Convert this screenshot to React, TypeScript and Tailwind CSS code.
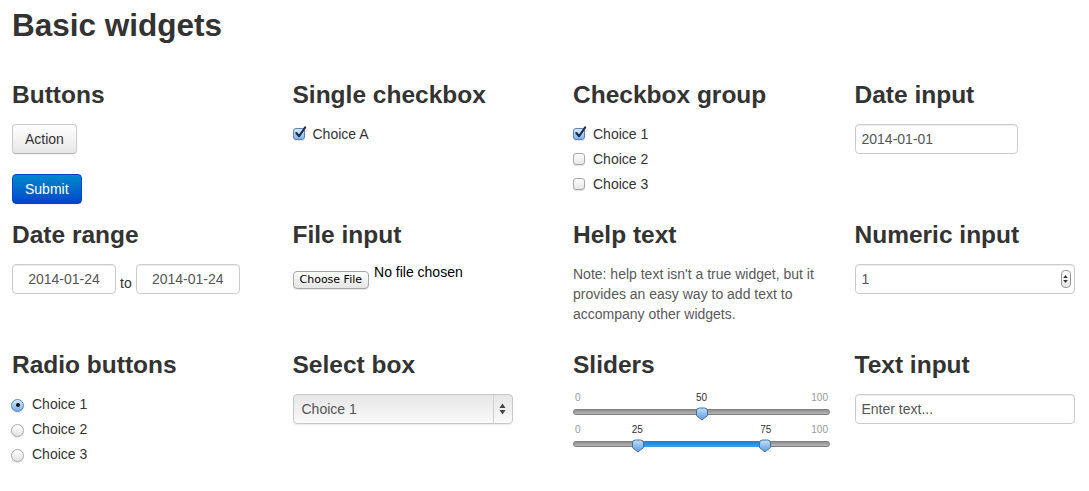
import React from "react";

function Check({ checked }: { checked?: boolean }) {
  return (
    <span
      className={`relative inline-block h-[12px] w-[12px] shrink-0 rounded-[3px] border ${
        checked
          ? "border-[#5b83b3] bg-linear-to-b from-[#d6eafc] to-[#7db4ea]"
          : "border-[#a8a8a8] bg-linear-to-b from-white to-[#e6e6e6]"
      } shadow-[0_1px_1px_rgba(0,0,0,0.12)]`}
    >
      {checked && (
        <svg
          viewBox="0 0 14 14"
          className="absolute left-[0px] top-[-3px] h-[13px] w-[13px]"
        >
          <path
            d="M2.5 7.5 L5.5 11 L12 1.5"
            fill="none"
            stroke="#1c2b48"
            strokeWidth="2.2"
            strokeLinecap="round"
            strokeLinejoin="round"
          />
        </svg>
      )}
    </span>
  );
}

function Radio({ checked }: { checked?: boolean }) {
  return (
    <span
      className={`relative flex h-[13px] w-[13px] shrink-0 items-center justify-center rounded-full border ${
        checked
          ? "border-[#5b83b3] bg-linear-to-b from-[#d6eafc] to-[#74aee8]"
          : "border-[#aaaaaa] bg-linear-to-b from-white to-[#e3e3e3]"
      } shadow-[0_1px_1px_rgba(0,0,0,0.12)]`}
    >
      {checked && <span className="h-[4px] w-[4px] rounded-full bg-[#111]" />}
    </span>
  );
}

function CheckRow({ label, checked }: { label: string; checked?: boolean }) {
  return (
    <div className="mb-[5px] flex h-[20px] items-center">
      <Check checked={checked} />
      <span className="ml-[8px]">{label}</span>
    </div>
  );
}

function RadioRow({ label, checked }: { label: string; checked?: boolean }) {
  return (
    <div className="mb-[5px] flex h-[20px] items-center">
      <span className="-ml-[1px] mt-[2px]">
        <Radio checked={checked} />
      </span>
      <span className="ml-[8px]">{label}</span>
    </div>
  );
}

function Heading({ children }: { children: React.ReactNode }) {
  return (
    <h3 className="mb-[9px] text-[24.5px] font-bold leading-[40px] text-[#333]">
      {children}
    </h3>
  );
}

function Thumb({ left }: { left: string }) {
  return (
    <svg
      viewBox="0 0 13 14"
      className="absolute top-[-3px] h-[14px] w-[13px] -translate-x-1/2"
      style={{ left }}
    >
      <defs>
        <linearGradient id="thumbfill" x1="0" y1="0" x2="0" y2="1">
          <stop offset="0" stopColor="#c4e1f9" />
          <stop offset="1" stopColor="#5b98dc" />
        </linearGradient>
      </defs>
      <path
        d="M1 4 Q1 1 4 1 H9 Q12 1 12 4 V8.5 L6.5 13 L1 8.5 Z"
        fill="url(#thumbfill)"
        stroke="#3e71ad"
        strokeWidth="1"
      />
    </svg>
  );
}

function Slider({
  values,
}: {
  values: number[];
}) {
  const lo = values[0];
  const hi = values[values.length - 1];
  return (
    <div className="w-[257px]">
      <div className="relative h-[12px] text-[10px] leading-[12px] text-[#999]">
        <span className="absolute left-[2px] top-0">0</span>
        <span className="absolute right-[2px] top-0">100</span>
        {values.map((v) => (
          <span
            key={v}
            className="absolute top-0 -translate-x-1/2 text-[#333]"
            style={{ left: `${v}%` }}
          >
            {v}
          </span>
        ))}
      </div>
      <div className="relative mt-[5px] h-[6px] rounded-full border border-[#7d7d7d] bg-linear-to-b from-[#8f8f8f] to-[#b8b8b8]">
        {values.length > 1 && (
          <div
            className="absolute top-[-1px] h-[6px] bg-linear-to-b from-[#1b7fd6] to-[#3aa0ea]"
            style={{ left: `${lo}%`, width: `${hi - lo}%` }}
          />
        )}
        {values.map((v) => (
          <Thumb key={v} left={`${v}%`} />
        ))}
      </div>
    </div>
  );
}

const inputCls =
  "h-[30px] rounded-[4px] border border-[#cccccc] bg-white px-[6px] text-[14px] text-[#555] shadow-[inset_0_1px_1px_rgba(0,0,0,0.075)] outline-none";

export default function App() {
  return (
    <div className="min-h-screen bg-white pl-[12px] font-['Liberation_Sans',Arial,sans-serif] text-[14px] leading-[20px] text-[#333]">
      <h2 className="pt-[5px] text-[31.5px] font-bold leading-[40px]">
        Basic widgets
      </h2>

      <div className="mt-[30px] grid grid-cols-[260px_260px_261px_221px] gap-x-[20.5px]">
        <div>
          <Heading>Buttons</Heading>
          <button className="h-[30px] rounded-[4px] border border-[#cccccc] border-b-[#b3b3b3] bg-linear-to-b from-white to-[#e6e6e6] px-[12px] text-[14px] text-[#333] shadow-[0_1px_2px_rgba(0,0,0,0.05)]">
            Action
          </button>
          <div className="mt-[20px]">
            <button className="h-[30px] rounded-[4px] border border-[#0044cc] bg-linear-to-b from-[#0088cc] to-[#0044cc] px-[12px] text-[14px] text-white shadow-[0_1px_2px_rgba(0,0,0,0.05)]">
              Submit
            </button>
          </div>
        </div>
        <div>
          <Heading>Single checkbox</Heading>
          <CheckRow label="Choice A" checked />
        </div>
        <div>
          <Heading>Checkbox group</Heading>
          <CheckRow label="Choice 1" checked />
          <CheckRow label="Choice 2" />
          <CheckRow label="Choice 3" />
        </div>
        <div>
          <Heading>Date input</Heading>
          <input readOnly value="2014-01-01" className={`${inputCls} w-[163px]`} />
        </div>
      </div>

      <div className="mt-[11px] grid grid-cols-[260px_260px_261px_221px] gap-x-[20.5px]">
        <div>
          <Heading>Date range</Heading>
          <div className="flex items-end">
            <input
              readOnly
              value="2014-01-24"
              className={`${inputCls} w-[104px] text-center`}
            />
            <span className="mx-[4px] pb-[1px]">to</span>
            <input
              readOnly
              value="2014-01-24"
              className={`${inputCls} w-[104px] text-center`}
            />
          </div>
        </div>
        <div>
          <Heading>File input</Heading>
          <div className="flex items-start">
            <button className="mt-[7px] h-[18px] rounded-[4px] border border-[#a6a6a6] bg-linear-to-b from-white to-[#e4e4e4] px-[6px] font-['DejaVu_Sans',sans-serif] text-[11px] leading-[16px] text-black shadow-[0_1px_1px_rgba(0,0,0,0.1)]">
              Choose File
            </button>
            <span className="ml-[5px] -mt-[2px] text-black">No file chosen</span>
          </div>
        </div>
        <div>
          <Heading>Help text</Heading>
          <p className="text-[#595959]">
            Note: help text isn't a true widget, but it provides an easy way to
            add text to accompany other widgets.
          </p>
        </div>
        <div>
          <Heading>Numeric input</Heading>
          <div className="relative w-[220px]">
            <input readOnly value="1" className={`${inputCls} w-[220px]`} />
            <div className="absolute right-[4px] top-[6px] flex h-[18px] w-[10px] flex-col items-center justify-center gap-[2px] rounded-[4px] border border-[#9a9a9a] bg-linear-to-b from-white to-[#e6e6e6]">
              <svg viewBox="0 0 6 4" className="h-[3px] w-[5px]">
                <path d="M0 4 L3 0 L6 4 Z" fill="#333" />
              </svg>
              <svg viewBox="0 0 6 4" className="h-[3px] w-[5px]">
                <path d="M0 0 L3 4 L6 0 Z" fill="#333" />
              </svg>
            </div>
          </div>
        </div>
      </div>

      <div className="mt-[21px] grid grid-cols-[260px_260px_261px_221px] gap-x-[20.5px]">
        <div>
          <Heading>Radio buttons</Heading>
          <RadioRow label="Choice 1" checked />
          <RadioRow label="Choice 2" />
          <RadioRow label="Choice 3" />
        </div>
        <div>
          <Heading>Select box</Heading>
          <div className="flex h-[30px] w-[220px] items-stretch rounded-[4px] border border-[#c8c8c8] bg-linear-to-b from-[#e6e6e6] via-[#efefef] to-[#fbfbfb] text-[#555] shadow-[0_1px_1px_rgba(0,0,0,0.08)]">
            <span className="flex flex-1 items-center pl-[8px]">Choice 1</span>
            <span className="flex w-[19px] items-center justify-center border-l border-[#d0d0d0]">
              <svg viewBox="0 0 7 12" className="h-[12px] w-[7px]">
                <path d="M0.5 5 L3.5 0.5 L6.5 5 Z" fill="#444" />
                <path d="M0.5 7 L3.5 11.5 L6.5 7 Z" fill="#444" />
              </svg>
            </span>
          </div>
        </div>
        <div>
          <Heading>Sliders</Heading>
          <div className="-mt-[2px]">
            <Slider values={[50]} />
            <div className="mt-[9px]">
              <Slider values={[25, 75]} />
            </div>
          </div>
        </div>
        <div>
          <Heading>Text input</Heading>
          <input
            readOnly
            placeholder="Enter text..."
            className={`${inputCls} w-[220px] placeholder:text-[#555]`}
          />
        </div>
      </div>
    </div>
  );
}
